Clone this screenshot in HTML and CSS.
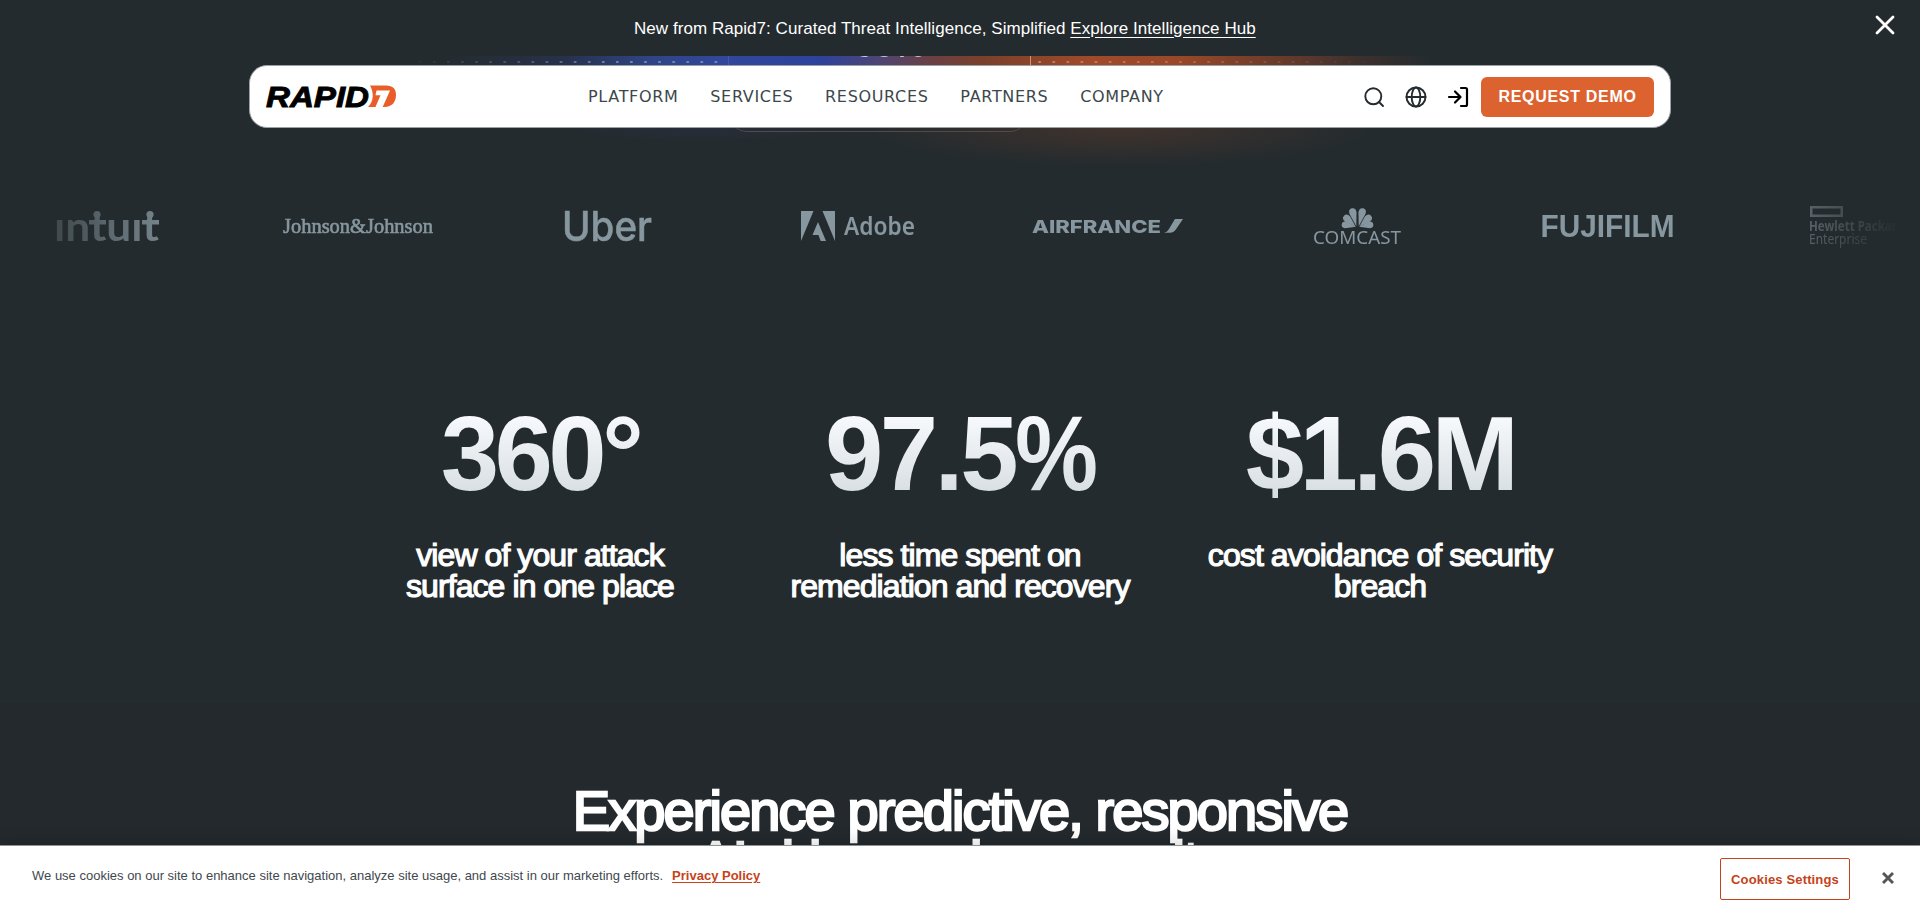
FILE: index.html
```
<!DOCTYPE html>
<html lang="en">
<head>
<meta charset="utf-8">
<title>Rapid7</title>
<link rel="stylesheet" href="styles.css">
</head>
<body>
<div class="page">
  <div class="announcement">
    <p class="announcement-text">New from Rapid7: Curated Threat Intelligence, Simplified <a class="announcement-link" href="#">Explore Intelligence Hub</a></p>
    <svg class="announcement-close" width="20" height="20" viewBox="0 0 20 20"><path d="M2 2l16 16M18 2L2 18" fill="none" stroke="#fff" stroke-width="2.800" stroke-linecap="round"/></svg>
  </div>

  <header class="hero">
    <div class="glow glow-top"><span class="glow-value">90%</span></div>
    <div class="glow glow-bottom"></div>
    <nav class="navbar">
      <svg class="brand" width="132" height="24" viewBox="0 0 132 24">
        <text x="0" y="22" class="brand-name" textLength="103" lengthAdjust="spacingAndGlyphs">RAPID</text>
        <path d="M104 .5h16c7 0 10 3.500 10 9.500c0 7-4 12-11.500 12H102c6-6 6-14 2-21.500z" fill="#e95e28"/>
        <path d="M110.500 5.500h13.500l-7.300 16.500h-7.200l5-11.700h-5z" fill="#fff"/>
      </svg>
      <ul class="menu">
        <li>PLATFORM</li><li>SERVICES</li><li>RESOURCES</li><li>PARTNERS</li><li>COMPANY</li>
      </ul>
      <div class="actions">
        <svg class="icon" width="22" height="22" viewBox="0 0 22 22"><circle cx="10.300" cy="10.300" r="8" /><path d="M16 16l4 4"/></svg>
        <svg class="icon" width="22" height="22" viewBox="0 0 22 22"><circle cx="11" cy="11" r="9.500"/><ellipse cx="11" cy="11" rx="4.300" ry="9.500"/><path d="M1.500 11h19"/></svg>
        <svg class="icon icon-dark" width="22" height="22" viewBox="0 0 22 22"><path d="M2 11h11M8 5.500l5.500 5.500L8 16.500M14 2h4.500q1.500 0 1.500 1.500v15q0 1.500-1.500 1.500H14"/></svg>
        <a class="demo" href="#">REQUEST DEMO</a>
      </div>
    </nav>
  </header>

  <section class="logos">
    <div class="logo"><svg width="105" height="32" viewBox="0 0 105 32">
      <text x="-2" y="31" class="l-intuit" textLength="105" lengthAdjust="spacingAndGlyphs">ıntuıt</text>
      <circle cx="41" cy="4.500" r="3.600"/><circle cx="94" cy="4.500" r="3.600"/><path d="M33 10h17v4.500H33zM86 10h17v4.500H86z"/>
    </svg></div>
    <div class="logo"><svg width="150" height="24" viewBox="0 0 150 24"><text x="0" y="18.500" class="l-jj" textLength="150" lengthAdjust="spacingAndGlyphs">Johnson&amp;Johnson</text></svg></div>
    <div class="logo"><svg width="87" height="32" viewBox="0 0 87 32"><text x="-3" y="31" class="l-uber" textLength="90" lengthAdjust="spacingAndGlyphs">Uber</text></svg></div>
    <div class="logo"><svg width="114" height="32" viewBox="0 0 114 32">
      <path d="M0 1h12.500L0 31zM21.500 1H34v30zM17 12l8 19h-5.300l-2.300-6H11.500z"/>
      <text x="43" y="24.500" class="l-adobe" textLength="71" lengthAdjust="spacingAndGlyphs">Adobe</text>
    </svg></div>
    <div class="logo"><svg width="150" height="20" viewBox="0 0 150 20">
      <text x="-1" y="16.500" class="l-air" textLength="129" lengthAdjust="spacingAndGlyphs">AIRFRANCE</text>
      <path d="M142 3h8l-7.500 11q-2 2.700-5 2.700h-6.500q3-.7 4.500-3z"/>
    </svg></div>
    <div class="logo"><svg width="90" height="38" viewBox="0 0 90 38">
      <g transform="translate(44.500 20)">
        <path d="M0 0L-3.600-13.500Q-4-18.500 0-18.500Q4-18.500 3.600-13.500z" transform="rotate(-14) translate(-1 -1)"/>
        <path d="M0 0L-3.600-13.500Q-4-18.500 0-18.500Q4-18.500 3.600-13.500z" transform="rotate(14) translate(1 -1)"/>
        <path d="M0 0L-3.600-10.500Q-4-15.500 0-15.500Q4-15.500 3.600-10.500z" transform="rotate(-47) translate(-1 -2)"/>
        <path d="M0 0L-3.600-10.500Q-4-15.500 0-15.500Q4-15.500 3.600-10.500z" transform="rotate(47) translate(1 -2)"/>
        <path d="M0 0L-3.400-10.500Q-3.600-14.500 0-14.500Q3.400-14.500 3.400-10.500z" transform="rotate(-80) translate(0 -1.500)"/>
        <path d="M0 0L-3.400-10.500Q-3.600-14.500 0-14.500Q3.400-14.500 3.400-10.500z" transform="rotate(80) translate(0 -1.500)"/>
      </g>
      <text x="0" y="36.500" class="l-comcast" textLength="88" lengthAdjust="spacingAndGlyphs">COMCAST</text>
    </svg></div>
    <div class="logo"><svg width="132" height="26" viewBox="0 0 132 26"><text x="-1.500" y="23.500" class="l-fuji" textLength="134" lengthAdjust="spacingAndGlyphs">FUJIFILM</text></svg></div>
    <div class="logo"><svg width="98" height="42" viewBox="0 0 98 42">
      <path d="M1 1h33v11H1zM3.500 3.500v6h28v-6z" fill-rule="evenodd"/>
      <text x="0" y="25.500" class="l-hpe-bold" textLength="95" lengthAdjust="spacingAndGlyphs">Hewlett Packard</text>
      <text x="0" y="39" class="l-hpe" textLength="58" lengthAdjust="spacingAndGlyphs">Enterprise</text>
    </svg></div>
  </section>

  <section class="stats">
    <div class="stat"><div class="stat-value">360°</div><p class="stat-label">view of your attack<br>surface in one place</p></div>
    <div class="stat"><div class="stat-value stat-value-wide">97.5<span class="percent">%</span></div><p class="stat-label">less time spent on<br>remediation and recovery</p></div>
    <div class="stat"><div class="stat-value">$1.6M</div><p class="stat-label">cost avoidance of security<br>breach</p></div>
  </section>

  <section class="experience">
    <h2 class="experience-title">Experience predictive, responsive<br>AI-driven cybersecurity</h2>
  </section>

  <div class="cookies">
    <p class="cookies-text">We use cookies on our site to enhance site navigation, analyze site usage, and assist in our marketing efforts.<a class="cookies-link" href="#">Privacy Policy</a></p>
    <div class="cookies-actions">
      <a class="cookies-button" href="#">Cookies Settings</a>
      <svg width="12" height="12" viewBox="0 0 12 12"><path d="M1 1l10 10M11 1L1 11" fill="none" stroke="#565656" stroke-width="2.900"/></svg>
    </div>
  </div>
</div>
</body>
</html>
```
FILE: styles.css
```
* { box-sizing: border-box; }
body { margin: 0; background: #242b2e; font-family: "Liberation Sans", Arial, sans-serif; color: #fff; }
p, h2, ul { margin: 0; padding: 0; }
.page { position: relative; height: 916px; overflow: hidden; }

.announcement { height: 56px; display: flex; align-items: flex-start; justify-content: space-between; padding: 15px 25px 0 634px; background: #242b2e; }
.announcement-text { font-size: 17px; line-height: 27px; letter-spacing: 0.05px; white-space: nowrap; }
.announcement-link { color: #fff; text-underline-offset: 3px; }

.hero { position: relative; height: 134px; padding: 9px 249px 0; }
.glow { position: absolute; left: 0; right: 0; overflow: hidden; }
.glow::before, .glow::after { content: ""; position: absolute; inset: 0; }
.glow-top { top: 0; height: 13px; background: linear-gradient(90deg, #242b2e 440px, #26304a 560px, #2f4485 650px, #31479b 725px, #2d429b 820px, #4e4573 880px, #6a4045 930px, #79402c 980px, #8a4429 1030px, #a04a2a 1090px, #984828 1180px, #693b2b 1280px, #3d302d 1360px, #242b2e 1430px); }
.glow-top::before { left: 728px; right: auto; width: 301px; border: 1px solid rgba(150,140,210,.25); border-right-color: #c9977e; border-top: 0; border-bottom: 0; }
.glow-top::after { background: radial-gradient(circle at 7px 6px, rgba(255,255,255,.35) 1px, transparent 1.5px) 5px 0 / 14.080px 14px; mask-image: linear-gradient(90deg, transparent 400px, #000 600px, #000 728px, transparent 728px, transparent 1029px, #000 1030px, transparent 1390px); }
.glow-value { position: absolute; left: 855px; top: -34px; font-size: 35px; line-height: 46px; font-weight: 700; color: #c9c5d6; filter: blur(.5px); }
.glow-bottom { top: 72px; height: 46px; background: radial-gradient(ellipse 250px 38px at 1120px 0, rgba(92,58,44,.5), rgba(36,43,46,0)), radial-gradient(ellipse 150px 14px at 700px 0, rgba(40,48,80,.4), rgba(36,43,46,0)); }
.glow-bottom::after { left: 729px; right: auto; top: -24px; width: 297px; height: 26px; border: 1px solid #55484a; border-radius: 0 0 18px 18px; }

.navbar { position: relative; height: 63px; display: grid; grid-template-columns: 322px 1fr auto; align-items: center; padding: 0 16px; background: #fff; border: 1px solid #9aa2a6; border-radius: 18px; }
.brand { overflow: visible; }
.brand-name { font: italic 700 29px "Liberation Sans", Arial, sans-serif; fill: #000; stroke: #000; stroke-width: .9px; }
.menu { display: flex; gap: 31.800px; list-style: none; font: 16px "DejaVu Sans", sans-serif; letter-spacing: .67px; color: #3c474c; }
.actions { display: flex; align-items: center; gap: 20px; }
.icon { fill: none; stroke: #232b2f; stroke-width: 1.900; stroke-linecap: round; stroke-linejoin: round; }
.icon-dark { stroke: #000; stroke-width: 2.200; }
.demo { width: 173px; height: 40px; margin-left: -8px; border-radius: 6px; background: #dc6230; color: #fff; text-decoration: none; font-size: 16px; font-weight: 700; line-height: 40px; letter-spacing: .7px; text-align: center; }

.logos { height: 72px; margin-left: -17px; display: grid; grid-template-columns: repeat(8, 250px); align-items: center; fill: #87979f; mask-image: linear-gradient(90deg, transparent 18px, #000 210px, #000 1740px, transparent 1918px); }
.logo { display: flex; justify-content: center; }
.logo svg { overflow: visible; }
.l-intuit { font: 700 41px Lato, sans-serif; }
.l-jj { font: 500 20px "Liberation Serif", serif; stroke: #87979f; stroke-width: .6px; }
.l-uber { font: 500 41.500px Inter, sans-serif; stroke: #87979f; stroke-width: .5px; }
.l-adobe { font: 600 25px "Noto Sans", sans-serif; }
.l-air { font: 800 18px Inter, sans-serif; }
.l-comcast { font: 400 18.500px "Noto Sans", sans-serif; }
.l-fuji { font: 700 31px "Liberation Sans", sans-serif; }
.l-hpe-bold { font: 700 13.500px "Noto Sans", sans-serif; }
.l-hpe { font: 400 13.500px "Noto Sans", sans-serif; }

.stats { height: 440px; display: grid; grid-template-columns: repeat(3, 420px); justify-content: center; padding-top: 140px; text-align: center; border-bottom: 1px solid #252c37; }
.stat-value { height: 104px; font-size: 105px; font-weight: 700; line-height: 104px; letter-spacing: -4.700px; font-kerning: none; white-space: nowrap; color: transparent; background: linear-gradient(180deg, #f8fafd 12%, #d5dcdf 95%); background-clip: text; -webkit-background-clip: text; }
.stat-value-wide { letter-spacing: -3.600px; }
.percent { display: inline-block; width: 92px; height: 104px; margin-right: -12px; vertical-align: top; text-align: left; transform: scaleX(.89); transform-origin: left; background: linear-gradient(180deg, #f8fafd 12%, #d5dcdf 95%); background-clip: text; -webkit-background-clip: text; }
.stat-label { margin-top: 34px; font-size: 32px; line-height: 31px; letter-spacing: -.92px; -webkit-text-stroke: 1.200px #fff; }

.experience { padding-top: 84px; text-align: center; background: #23292d; height: 300px; }
.experience-title { font-size: 56px; font-weight: 400; line-height: 50px; letter-spacing: -1.900px; -webkit-text-stroke: 2.400px #fff; }

.cookies { position: absolute; left: 0; right: 0; bottom: 0; height: 71px; padding: 12px 26px 0 32px; display: flex; justify-content: space-between; background: #fff; box-shadow: 0 0 18px rgba(0,0,0,.2); border-top: 1px solid #8d9294; }
.cookies-text { margin-top: 8px; font-size: 13px; line-height: 20px; color: #3f484d; }
.cookies-link { margin-left: 9px; color: #c5431a; font-weight: 700; text-underline-offset: 2px; }
.cookies-actions { display: flex; align-items: flex-start; gap: 32px; }
.cookies-actions svg { margin-top: 14px; }
.cookies-button { width: 130px; height: 42px; border: 1px solid #c5431a; border-radius: 2px; color: #c5431a; text-decoration: none; font-size: 13px; font-weight: 700; line-height: 41px; letter-spacing: .15px; text-align: center; white-space: nowrap; }
```
